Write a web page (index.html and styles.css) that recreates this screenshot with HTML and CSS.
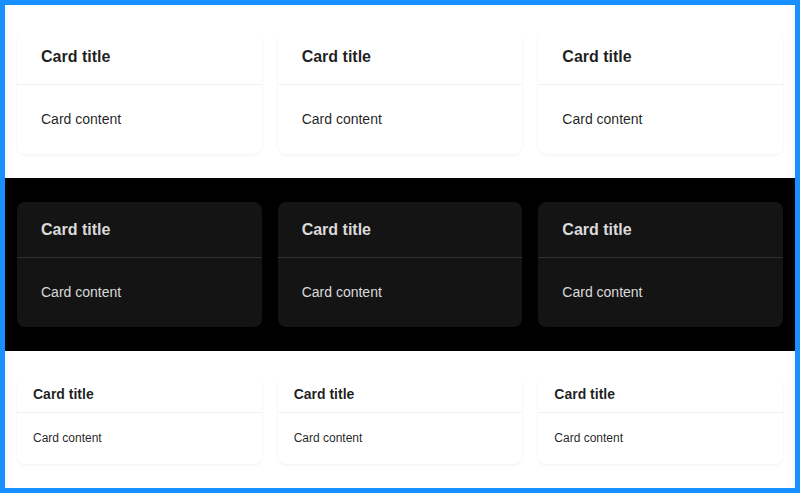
FILE: index.html
```html
<!DOCTYPE html>
<html>
<head>
<meta charset="utf-8">
<link rel="stylesheet" href="styles.css">
</head>
<body>
<div class="frame">
  <section class="row row-light">
    <div class="card"><div class="card-head">Card title</div><div class="card-body">Card content</div></div>
    <div class="card"><div class="card-head">Card title</div><div class="card-body">Card content</div></div>
    <div class="card"><div class="card-head">Card title</div><div class="card-body">Card content</div></div>
  </section>
  <section class="row row-dark">
    <div class="card card-dark"><div class="card-head">Card title</div><div class="card-body">Card content</div></div>
    <div class="card card-dark"><div class="card-head">Card title</div><div class="card-body">Card content</div></div>
    <div class="card card-dark"><div class="card-head">Card title</div><div class="card-body">Card content</div></div>
  </section>
  <section class="row row-light">
    <div class="card card-small"><div class="card-head">Card title</div><div class="card-body">Card content</div></div>
    <div class="card card-small"><div class="card-head">Card title</div><div class="card-body">Card content</div></div>
    <div class="card card-small"><div class="card-head">Card title</div><div class="card-body">Card content</div></div>
  </section>
</div>
</body>
</html>
```
FILE: styles.css
```css
* { box-sizing: border-box; }
html, body { margin: 0; padding: 0; }
body {
  font-family: "Liberation Sans", Arial, sans-serif;
  background: #fff;
}
.frame {
  width: 800px;
  height: 493px;
  border: 5px solid #1890ff;
  display: flex;
  flex-direction: column;
}
.row {
  display: grid;
  grid-template-columns: repeat(3, 1fr);
  gap: 16px;
  padding: 24px 12px;
  align-items: start;
}
.row-light { background: #fff; }
.row-dark { background: #000; }
.card {
  background: #fff;
  border-radius: 8px;
  color: rgba(0, 0, 0, 0.88);
  box-shadow: 0 1px 2px 0 rgba(0,0,0,0.03), 0 1px 6px -1px rgba(0,0,0,0.02), 0 2px 4px 0 rgba(0,0,0,0.02);
}
.card-head {
  min-height: 56px;
  display: flex;
  align-items: center;
  padding: 0 24px;
  font-size: 16px;
  font-weight: 600;
  border-bottom: 1px solid #f0f0f0;
  margin-bottom: -1px;
}
.card-body {
  padding: 24px;
  font-size: 14px;
  line-height: 22px;
}
.card-dark {
  background: #141414;
  color: rgba(255, 255, 255, 0.85);
  box-shadow: none;
}
.card-dark .card-head { border-bottom-color: #303030; }
.card-small .card-head {
  min-height: 38px;
  padding: 0 16px;
  font-size: 14px;
}
.card-small .card-body {
  padding: 16px;
  font-size: 12px;
  line-height: 20px;
}
```
